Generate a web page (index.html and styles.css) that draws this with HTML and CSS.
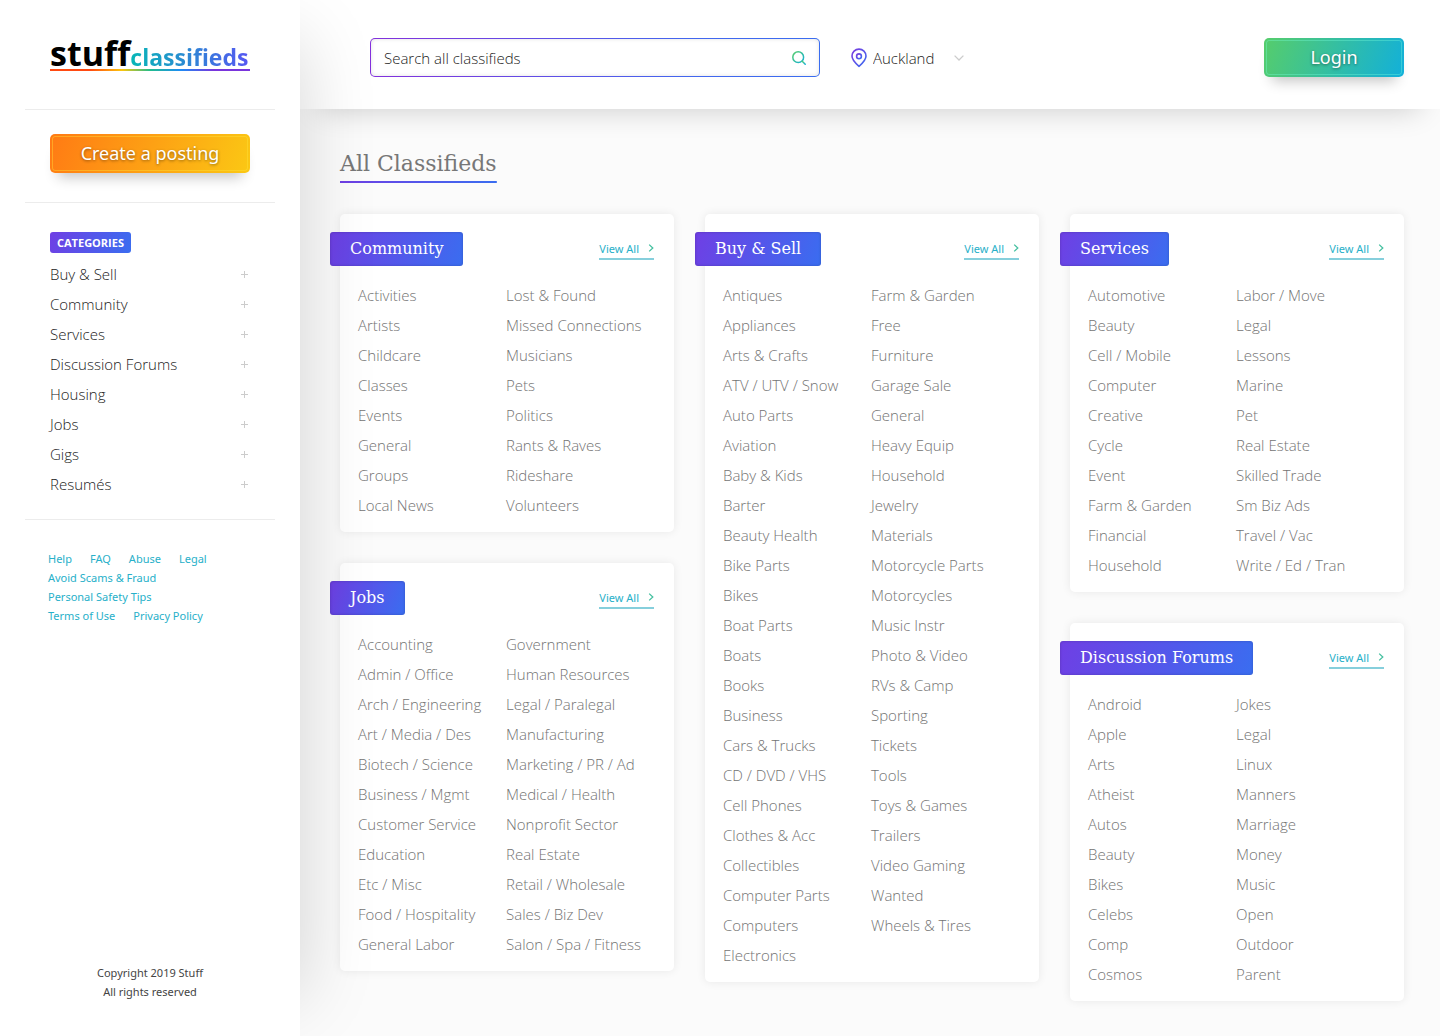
FILE: index.html
```html
<!DOCTYPE html>
<html lang="en">
<head>
<meta charset="utf-8">
<meta name="viewport" content="width=device-width, initial-scale=1">
<title>Stuff Classifieds</title>
<link rel="stylesheet" href="styles.css">
</head>
<body>
<svg class="sprite" aria-hidden="true">
  <defs>
    <linearGradient id="green-cyan" x1="0" y1="0" x2="1" y2="1"><stop offset="0" stop-color="#56cd6b"/><stop offset="1" stop-color="#14b1d8"/></linearGradient>
    <linearGradient id="purple-blue" x1="0" y1="0" x2="1" y2="1"><stop offset="0" stop-color="#7a3be0"/><stop offset="1" stop-color="#3b6cf0"/></linearGradient>
    <symbol id="chevron" viewBox="0 0 6 8"><path d="M1.2.6 4.8 4 1.2 7.4" fill="none" stroke="#45c0a0" stroke-width="1.3"/></symbol>
    <symbol id="plus" viewBox="0 0 7 7"><path d="M3.5 0v7M0 3.5h7" fill="none" stroke="#ccc" stroke-width="1"/></symbol>
  </defs>
</svg>
<div class="layout">
  <aside class="sidebar">
    <a class="logo" href="#"><span class="logo-main">stuff</span><span class="logo-sub">classifieds</span></a>
    <div class="posting"><button class="btn btn-orange" type="button">Create a posting</button></div>
    <nav class="categories" aria-label="Categories">
      <h2 class="badge">CATEGORIES</h2>
      <ul class="category-list">
        <li><a href="#">Buy &amp; Sell</a><button type="button" aria-label="Expand Buy &amp; Sell"><svg><use href="#plus"/></svg></button></li>
        <li><a href="#">Community</a><button type="button" aria-label="Expand Community"><svg><use href="#plus"/></svg></button></li>
        <li><a href="#">Services</a><button type="button" aria-label="Expand Services"><svg><use href="#plus"/></svg></button></li>
        <li><a href="#">Discussion Forums</a><button type="button" aria-label="Expand Discussion Forums"><svg><use href="#plus"/></svg></button></li>
        <li><a href="#">Housing</a><button type="button" aria-label="Expand Housing"><svg><use href="#plus"/></svg></button></li>
        <li><a href="#">Jobs</a><button type="button" aria-label="Expand Jobs"><svg><use href="#plus"/></svg></button></li>
        <li><a href="#">Gigs</a><button type="button" aria-label="Expand Gigs"><svg><use href="#plus"/></svg></button></li>
        <li><a href="#">Resumés</a><button type="button" aria-label="Expand Resumés"><svg><use href="#plus"/></svg></button></li>
      </ul>
    </nav>
    <div class="help-links">
      <div><a href="#">Help</a><a href="#">FAQ</a><a href="#">Abuse</a><a href="#">Legal</a></div>
      <div><a href="#">Avoid Scams &amp; Fraud</a></div>
      <div><a href="#">Personal Safety Tips</a></div>
      <div><a href="#">Terms of Use</a><a href="#">Privacy Policy</a></div>
    </div>
    <p class="copyright">Copyright 2019 Stuff<br>All rights reserved</p>
  </aside>
  <div class="content">
    <header class="topbar">
      <form class="search" role="search">
        <input type="text" aria-label="Search all classifieds" placeholder="Search all classifieds">
        <button type="button" aria-label="Search"><svg width="16" height="16" viewBox="0 0 16 16"><g fill="none" stroke="url(#green-cyan)" stroke-width="1.5" stroke-linecap="round"><circle cx="7.2" cy="7.2" r="5.4"/><path d="M11.2 11.2 14.2 14.2"/></g></svg></button>
      </form>
      <div class="location">
        <svg width="16" height="20" viewBox="0 0 16 20"><g fill="none" stroke="url(#purple-blue)" stroke-width="1.6"><path d="M8 18.3C5.200 16 1 12.500 1 8.100a7 7 0 0 1 14 0C15 12.500 10.800 16 8 18.300Z"/><circle cx="8" cy="8.300" r="2.400"/></g></svg>
        <select aria-label="Location"><option>Auckland</option><option>Wellington</option><option>Christchurch</option></select>
        <svg width="10" height="6" viewBox="0 0 10 6"><path d="M.6.6 5 5 9.400.6" fill="none" stroke="#ccc" stroke-width="1.300"/></svg>
      </div>
      <button class="btn btn-green" type="button">Login</button>
    </header>
    <main class="main">
      <h1 class="title">All Classifieds</h1>
      <div class="board">
        <div class="column">
          <section class="card">
            <header class="card-head"><h2>Community</h2><a class="view-all" href="#">View All<svg><use href="#chevron"/></svg></a></header>
            <div class="card-lists">
              <ul><li><a href="#">Activities</a></li><li><a href="#">Artists</a></li><li><a href="#">Childcare</a></li><li><a href="#">Classes</a></li><li><a href="#">Events</a></li><li><a href="#">General</a></li><li><a href="#">Groups</a></li><li><a href="#">Local News</a></li></ul>
              <ul><li><a href="#">Lost &amp; Found</a></li><li><a href="#">Missed Connections</a></li><li><a href="#">Musicians</a></li><li><a href="#">Pets</a></li><li><a href="#">Politics</a></li><li><a href="#">Rants &amp; Raves</a></li><li><a href="#">Rideshare</a></li><li><a href="#">Volunteers</a></li></ul>
            </div>
          </section>
          <section class="card">
            <header class="card-head"><h2>Jobs</h2><a class="view-all" href="#">View All<svg><use href="#chevron"/></svg></a></header>
            <div class="card-lists">
              <ul><li><a href="#">Accounting</a></li><li><a href="#">Admin / Office</a></li><li><a href="#">Arch / Engineering</a></li><li><a href="#">Art / Media / Des</a></li><li><a href="#">Biotech / Science</a></li><li><a href="#">Business / Mgmt</a></li><li><a href="#">Customer Service</a></li><li><a href="#">Education</a></li><li><a href="#">Etc / Misc</a></li><li><a href="#">Food / Hospitality</a></li><li><a href="#">General Labor</a></li></ul>
              <ul><li><a href="#">Government</a></li><li><a href="#">Human Resources</a></li><li><a href="#">Legal / Paralegal</a></li><li><a href="#">Manufacturing</a></li><li><a href="#">Marketing / PR / Ad</a></li><li><a href="#">Medical / Health</a></li><li><a href="#">Nonprofit Sector</a></li><li><a href="#">Real Estate</a></li><li><a href="#">Retail / Wholesale</a></li><li><a href="#">Sales / Biz Dev</a></li><li><a href="#">Salon / Spa / Fitness</a></li></ul>
            </div>
          </section>
        </div>
        <div class="column">
          <section class="card">
            <header class="card-head"><h2>Buy &amp; Sell</h2><a class="view-all" href="#">View All<svg><use href="#chevron"/></svg></a></header>
            <div class="card-lists">
              <ul><li><a href="#">Antiques</a></li><li><a href="#">Appliances</a></li><li><a href="#">Arts &amp; Crafts</a></li><li><a href="#">ATV / UTV / Snow</a></li><li><a href="#">Auto Parts</a></li><li><a href="#">Aviation</a></li><li><a href="#">Baby &amp; Kids</a></li><li><a href="#">Barter</a></li><li><a href="#">Beauty Health</a></li><li><a href="#">Bike Parts</a></li><li><a href="#">Bikes</a></li><li><a href="#">Boat Parts</a></li><li><a href="#">Boats</a></li><li><a href="#">Books</a></li><li><a href="#">Business</a></li><li><a href="#">Cars &amp; Trucks</a></li><li><a href="#">CD / DVD / VHS</a></li><li><a href="#">Cell Phones</a></li><li><a href="#">Clothes &amp; Acc</a></li><li><a href="#">Collectibles</a></li><li><a href="#">Computer Parts</a></li><li><a href="#">Computers</a></li><li><a href="#">Electronics</a></li></ul>
              <ul><li><a href="#">Farm &amp; Garden</a></li><li><a href="#">Free</a></li><li><a href="#">Furniture</a></li><li><a href="#">Garage Sale</a></li><li><a href="#">General</a></li><li><a href="#">Heavy Equip</a></li><li><a href="#">Household</a></li><li><a href="#">Jewelry</a></li><li><a href="#">Materials</a></li><li><a href="#">Motorcycle Parts</a></li><li><a href="#">Motorcycles</a></li><li><a href="#">Music Instr</a></li><li><a href="#">Photo &amp; Video</a></li><li><a href="#">RVs &amp; Camp</a></li><li><a href="#">Sporting</a></li><li><a href="#">Tickets</a></li><li><a href="#">Tools</a></li><li><a href="#">Toys &amp; Games</a></li><li><a href="#">Trailers</a></li><li><a href="#">Video Gaming</a></li><li><a href="#">Wanted</a></li><li><a href="#">Wheels &amp; Tires</a></li></ul>
            </div>
          </section>
        </div>
        <div class="column">
          <section class="card">
            <header class="card-head"><h2>Services</h2><a class="view-all" href="#">View All<svg><use href="#chevron"/></svg></a></header>
            <div class="card-lists">
              <ul><li><a href="#">Automotive</a></li><li><a href="#">Beauty</a></li><li><a href="#">Cell / Mobile</a></li><li><a href="#">Computer</a></li><li><a href="#">Creative</a></li><li><a href="#">Cycle</a></li><li><a href="#">Event</a></li><li><a href="#">Farm &amp; Garden</a></li><li><a href="#">Financial</a></li><li><a href="#">Household</a></li></ul>
              <ul><li><a href="#">Labor / Move</a></li><li><a href="#">Legal</a></li><li><a href="#">Lessons</a></li><li><a href="#">Marine</a></li><li><a href="#">Pet</a></li><li><a href="#">Real Estate</a></li><li><a href="#">Skilled Trade</a></li><li><a href="#">Sm Biz Ads</a></li><li><a href="#">Travel / Vac</a></li><li><a href="#">Write / Ed / Tran</a></li></ul>
            </div>
          </section>
          <section class="card">
            <header class="card-head"><h2>Discussion Forums</h2><a class="view-all" href="#">View All<svg><use href="#chevron"/></svg></a></header>
            <div class="card-lists">
              <ul><li><a href="#">Android</a></li><li><a href="#">Apple</a></li><li><a href="#">Arts</a></li><li><a href="#">Atheist</a></li><li><a href="#">Autos</a></li><li><a href="#">Beauty</a></li><li><a href="#">Bikes</a></li><li><a href="#">Celebs</a></li><li><a href="#">Comp</a></li><li><a href="#">Cosmos</a></li></ul>
              <ul><li><a href="#">Jokes</a></li><li><a href="#">Legal</a></li><li><a href="#">Linux</a></li><li><a href="#">Manners</a></li><li><a href="#">Marriage</a></li><li><a href="#">Money</a></li><li><a href="#">Music</a></li><li><a href="#">Open</a></li><li><a href="#">Outdoor</a></li><li><a href="#">Parent</a></li></ul>
            </div>
          </section>
        </div>
      </div>
    </main>
  </div>
</div>
</body>
</html>
```
FILE: styles.css
```css
* { box-sizing: border-box; }

body {
  margin: 0;
  background: #fbfbfb;
  color: #222;
  font: 300 15px/30px "Open Sans", "Noto Sans", sans-serif;
}

h1, h2, p, ul { margin: 0; padding: 0; }
ul { list-style: none; }
a { color: inherit; text-decoration: none; }
button, input, select { font: inherit; color: inherit; }
button { border: 0; padding: 0; background: none; cursor: pointer; }
svg { display: block; flex: none; }
.sprite { position: absolute; width: 0; height: 0; }

.layout {
  display: grid;
  grid-template-columns: 300px minmax(0, 1fr);
  min-height: 100vh;
}

/* Sidebar */
.sidebar {
  position: relative;
  z-index: 1;
  display: flex;
  flex-direction: column;
  padding: 0 25px 35px;
  background: #fff;
  box-shadow: 40px 0 70px -40px rgba(0, 0, 0, .17);
}

.logo {
  display: flex;
  align-items: baseline;
  margin: 36px 25px 38px;
  background: linear-gradient(90deg, #ff4a12 20%, #fcc60e 36%, #22bd8c 50%, #1d8df5 65%, #7a35dc 82%) bottom / 100% 2px no-repeat;
  font-weight: 700;
}
.logo-main { font-size: 34px; line-height: 35px; color: #000; }
.logo-sub {
  font-size: 23px;
  line-height: 23px;
  background: linear-gradient(90deg, #06b7b7, #5557f2);
  -webkit-background-clip: text;
  background-clip: text;
  color: transparent;
}

.posting {
  padding: 24px 25px 29px;
  border: solid #ececec;
  border-width: 1px 0;
}

.btn {
  height: 39px;
  border-radius: 5px;
  color: #fff;
  font-family: "Noto Sans", "Open Sans", sans-serif;
  font-size: 18px;
  font-weight: 400;
  line-height: 39px;
  text-shadow: 0 1px 3px rgba(0, 0, 0, .45);
  outline: 1px solid rgba(255, 230, 60, .4);
  outline-offset: -3px;
  box-shadow: 0 12px 14px -8px rgba(0, 0, 0, .24);
}
.btn-orange { width: 100%; background: linear-gradient(110deg, #ff7a14, #fbc814); }
.btn-green { width: 140px; margin-left: auto; outline-color: rgba(120, 255, 220, .35); background: linear-gradient(110deg, #56cd6b, #12b0da); }

.categories {
  padding: 29px 25px 20px;
  border-bottom: 1px solid #ececec;
}
.badge {
  width: fit-content;
  margin-bottom: 6px;
  padding: 0 7px;
  border-radius: 3px;
  background: linear-gradient(110deg, #6f3fe4, #3a6df0);
  color: #fff;
  font-size: 11px;
  font-weight: 700;
  line-height: 21px;
}
.category-list li { display: flex; justify-content: space-between; align-items: center; }
.category-list button { padding: 2px; }
.category-list svg { width: 7px; height: 7px; }

.help-links {
  padding: 29px 23px;
  color: #27b0c9;
  font-family: "Noto Sans", "Open Sans", sans-serif;
  font-size: 11px;
  font-weight: 400;
  line-height: 19px;
}
.help-links div { display: flex; gap: 18px; }

.copyright {
  margin-top: auto;
  color: #444;
  font-family: "Noto Sans", "Open Sans", sans-serif;
  font-size: 11px;
  font-weight: 400;
  line-height: 19px;
  text-align: center;
}

/* Top bar */
.topbar {
  display: flex;
  align-items: center;
  height: 109px;
  padding: 6px 36px 0 70px;
  background: #fff;
  box-shadow: 0 20px 30px -20px rgba(0, 0, 0, .2);
}
.search {
  display: flex;
  align-items: center;
  width: 450px;
  height: 39px;
  padding: 0 12px 0 13px;
  border: 1px solid transparent;
  border-radius: 5px;
  background:
    linear-gradient(#fff, #fff) padding-box,
    linear-gradient(90deg, #8330dc, #4366ee 70%, #3a6df0) border-box;
  box-shadow: inset 0 0 4px rgba(0, 0, 0, .12);
}
.search input {
  flex: 1;
  min-width: 0;
  padding: 0;
  border: 0;
  outline: 0;
  background: none;
}
.search input::placeholder { color: #222; opacity: 1; }

.location {
  display: flex;
  align-items: center;
  gap: 6px;
  margin-left: 31px;
}
.location select {
  width: 75px;
  padding: 0;
  border: 0;
  background: none;
  appearance: none;
}

/* Listing board */
.main { padding: 39px 36px 34px 40px; }
.title {
  width: fit-content;
  margin-bottom: 31px;
  padding-bottom: 3px;
  background: linear-gradient(90deg, #6f3fe4, #3a6df0) bottom / 100% 2px no-repeat;
  color: #777;
  font: 400 22px/32px "DejaVu Serif", serif;
}
.board {
  display: grid;
  grid-template-columns: repeat(3, minmax(0, 1fr));
  align-items: start;
  gap: 31px;
}
.column { display: grid; gap: 31px; }

.card {
  padding: 18px 20px 12px 18px;
  border-radius: 5px;
  background: #fff;
  box-shadow: 0 0 10px rgba(0, 0, 0, .08);
}
.card-head {
  display: flex;
  justify-content: space-between;
  align-items: center;
  margin: 0 0 14px -28px;
}
.card-head h2 {
  padding: 0 20px;
  border-radius: 3px;
  background: linear-gradient(110deg, #6f3fe4, #3a6df0);
  box-shadow: inset 0 0 3px rgba(0, 0, 0, .2);
  color: #fff;
  font: 400 16px/34px "DejaVu Serif", serif;
}
.view-all {
  display: flex;
  align-items: center;
  gap: 9px;
  border-bottom: 2px solid #86cfdc;
  color: #27b0c9;
  font-family: "Noto Sans", "Open Sans", sans-serif;
  font-size: 11px;
  font-weight: 400;
  line-height: 19px;
}
.view-all svg { width: 6px; height: 8px; }

.card-lists {
  display: grid;
  grid-template-columns: 1fr 1fr;
  color: #737373;
}
.card-lists li { white-space: nowrap; }
```
